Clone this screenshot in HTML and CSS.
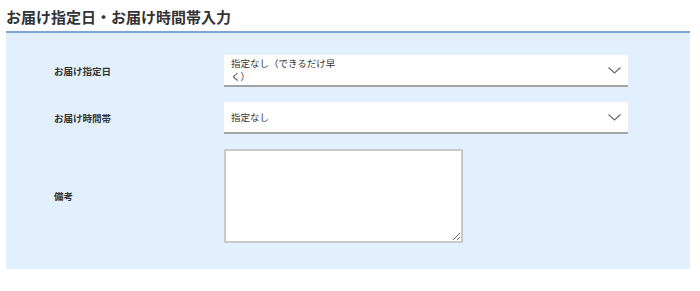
FILE: index.html
```html
<!DOCTYPE html>
<html lang="ja">
<head>
    <meta charset="UTF-8">
    <title>お届け指定日・お届け時間帯入力</title>
    <link rel="stylesheet" href="styles.css">
</head>
<body>
    <div class="delivery">
        <h2 class="delivery-title">お届け指定日・お届け時間帯入力</h2>

        <!-- 入力フォーム -->
        <div class="delivery-panel">
            <div class="form-row">
                <div class="form-label">お届け指定日</div>
                <div class="fake-select">
                    <span class="fake-select-value wrap">指定なし（できるだけ早く）</span>
                    <svg class="chevron" width="13" height="7" viewBox="0 0 13 7"><polyline points="0.5,0.5 6.5,6 12.5,0.5" fill="none" stroke="#6a6a6a" stroke-width="1.2"/></svg>
                </div>
            </div>
            <div class="form-row">
                <div class="form-label">お届け時間帯</div>
                <div class="fake-select">
                    <span class="fake-select-value">指定なし</span>
                    <svg class="chevron" width="13" height="7" viewBox="0 0 13 7"><polyline points="0.5,0.5 6.5,6 12.5,0.5" fill="none" stroke="#6a6a6a" stroke-width="1.2"/></svg>
                </div>
            </div>
            <div class="form-row">
                <label class="form-label" for="note">備考</label>
                <textarea id="note" class="note"></textarea>
            </div>
        </div>
    </div>
</body>
</html>
```
FILE: styles.css
```css
body {
    margin: 0;
    background: #fff;
    font-family: "Noto Sans CJK JP", "Noto Sans", sans-serif;
    color: #333;
}
.delivery {
    margin: 0 10px 0 6px;
}
.delivery-title {
    font-size: 15px;
    font-weight: bold;
    line-height: 20px;
    margin: 0;
    padding: 7px 0 4px 0;
    color: #333;
    border-bottom: 2px solid #7fa4d6;
}
.delivery-panel {
    background: #e2f0fe;
    padding: 22px 0 26px 0;
    display: flex;
    flex-direction: column;
    gap: 15px;
}
.form-row {
    display: flex;
    align-items: center;
}
.form-label {
    width: 218px;
    padding-left: 48px;
    box-sizing: border-box;
    font-size: 9.5px;
    font-weight: bold;
    color: #333;
}
.fake-select {
    width: 390px;
    height: 30px;
    background: #fff;
    border-bottom: 2px solid #a3a3a3;
    display: flex;
    align-items: center;
    justify-content: space-between;
    padding: 0 7px;
}
.fake-select-value {
    font-size: 9.5px;
    line-height: 13px;
    color: #333;
}
.fake-select-value.wrap {
    width: 108px;
}
.chevron {
    display: block;
    margin-top: 1px;
}
.note {
    width: 239px;
    height: 94px;
    box-sizing: border-box;
    margin: 0;
    border: 2px solid #c8c8c8;
    border-radius: 1px;
    background: #fff;
    font-family: inherit;
}
```
